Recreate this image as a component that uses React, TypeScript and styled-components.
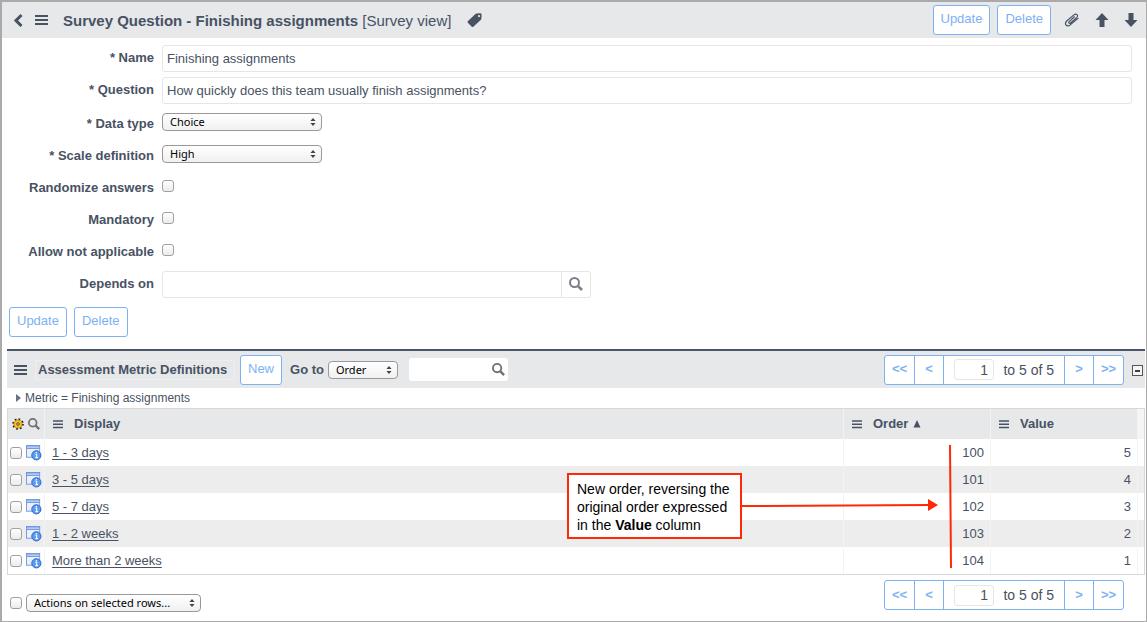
import React from "react";
import styled, { createGlobalStyle } from "styled-components";

const ink = "#485263";
const blue = "#7eb1f2";
const bar = "#e6e8ea";
const red = "#ff2a05";

const GlobalStyle = createGlobalStyle`
  * { box-sizing: border-box; }
  body {
    margin: 0;
    background: #fff;
    color: ${ink};
    font: 13px/16px "Liberation Sans", Arial, sans-serif;
  }
  button, input { font-family: inherit; color: inherit; margin: 0; }
`;

const Frame = styled.main`
  min-height: 100vh;
  border: solid #aaa;
  border-width: 2px 1px 1px 2px;
`;

const HeaderBar = styled.header`
  display: flex;
  align-items: center;
  height: 36px;
  padding: 0 8px 0 10px;
  background: ${bar};
`;

const Title = styled.h1`
  margin: 0 16px 0 15px;
  padding-top: 1px;
  font-size: 15px;
  line-height: 20px;
  span { font-weight: normal; }
`;

const Spacer = styled.div`
  flex: 1;
`;

const IconButton = styled.button`
  display: flex;
  padding: 0;
  border: 0;
  background: none;
`;

const HeaderTools = styled.div`
  display: flex;
  align-items: center;
  gap: 15px;
  margin-left: 13px;
`;

const ButtonGroup = styled.div`
  display: flex;
  gap: 7px;
`;

const Button = styled.button`
  height: 30px;
  padding: 0 7px 2px;
  border: 1px solid ${blue};
  border-radius: 3px;
  background: #fff;
  color: ${blue};
  font-size: 13px;
  line-height: 16px;
  white-space: nowrap;
`;

const Form = styled.form`
  padding: 4px 14px 0 5px;
`;

const FormRow = styled.div`
  display: flex;
  align-items: center;
  height: 32px;
  &:nth-child(n + 3) > label { padding-top: 3px; }
`;

const Label = styled.label`
  width: 147px;
  margin-right: 8px;
  font-weight: bold;
  text-align: right;
  white-space: nowrap;
`;

const TextInput = styled.input`
  flex: 1;
  min-width: 0;
  height: 27px;
  padding: 0 4px;
  border: 1px solid #e6e6e6;
  border-radius: 3px;
  font-size: 13px;
`;

const LookupGroup = styled.div`
  display: flex;
  width: 429px;
  padding-top: 4px;
  input { border-radius: 3px 0 0 3px; }
`;

const LookupButton = styled.button`
  display: flex;
  align-items: center;
  justify-content: center;
  width: 29px;
  height: 27px;
  padding: 0;
  border: 1px solid #e6e6e6;
  border-left: 0;
  border-radius: 0 3px 3px 0;
  background: #fff;
`;

const CheckBox = styled.input.attrs({ type: "checkbox" })`
  appearance: none;
  flex: none;
  width: 12px;
  height: 12px;
  border: 1px solid #a0a0a0;
  border-radius: 3px;
  background: linear-gradient(#fff, #ececec);
  &:checked { background: ${blue}; }
`;

const SelectWrap = styled.span<{ $width: number }>`
  position: relative;
  display: inline-flex;
  width: ${(p) => p.$width}px;
  svg {
    position: absolute;
    right: 6px;
    top: 5px;
    pointer-events: none;
  }
`;

const NativeSelect = styled.select`
  appearance: none;
  width: 100%;
  height: 18px;
  margin: 0;
  padding: 0 0 0 7px;
  border: 1px solid #999;
  border-radius: 4px;
  background: linear-gradient(#fff, #f0f0f0);
  color: #000;
  font: 11px/16px "Noto Sans", sans-serif;
`;

const FormActions = styled(ButtonGroup)`
  padding: 9px 7px 12px;
`;

const ListSection = styled.section`
  margin: 0 1px 0 5px;
  border-top: 2px solid #4b5568;
`;

const ListBar = styled.div`
  display: flex;
  align-items: center;
  height: 37px;
  padding: 0 2px 0 7px;
  background: ${bar};
`;

const ListTitle = styled.h2`
  min-width: 200px;
  margin: 0 5px 0 8px;
  padding: 1px 2px;
  border: 1px solid #eceef0;
  font-size: 13px;
  line-height: 16px;
  white-space: nowrap;
`;

const GoTo = styled.label`
  margin: 0 4px 0 8px;
  font-weight: bold;
  white-space: nowrap;
`;

const SearchBox = styled.div`
  display: flex;
  align-items: center;
  width: 99px;
  height: 23px;
  margin-left: 11px;
  padding-right: 3px;
  border-radius: 3px;
  background: #fff;
  input {
    flex: 1;
    min-width: 0;
    border: 0;
    background: none;
  }
`;

const PagerFrame = styled.nav`
  display: flex;
  flex: none;
  width: 240px;
  height: 30px;
  border: 1px solid ${blue};
  border-radius: 3px;
  background: #fff;
`;

const PageButton = styled.button<{ $side: "left" | "right" }>`
  width: 29px;
  padding: 0 0 2px;
  border: 0 solid ${blue};
  border-${(p) => (p.$side === "left" ? "right" : "left")}-width: 1px;
  background: none;
  color: ${blue};
  font-size: 13px;
  font-weight: bold;
  &:first-child, &:last-child { width: 30px; }
`;

const PageRange = styled.label`
  flex: 1;
  display: flex;
  align-items: center;
  justify-content: space-between;
  padding: 0 10px;
  font-size: 14px;
  white-space: nowrap;
`;

const PageInput = styled.input`
  width: 40px;
  height: 21px;
  padding: 0 5px;
  border: 1px solid #e6e6e6;
  border-radius: 3px;
  font-size: 14px;
  text-align: right;
`;

const Collapse = styled.button`
  display: flex;
  align-items: center;
  justify-content: center;
  width: 11px;
  height: 11px;
  margin: 2px 0 0 8px;
  padding: 0;
  border: 1px solid #555;
  background: #f5f5f5;
`;

const Breadcrumb = styled.div`
  display: flex;
  align-items: center;
  gap: 4px;
  height: 20px;
  padding-left: 9px;
  font-size: 12px;
`;

const TableArea = styled.div`
  position: relative;
`;

const Table = styled.table`
  width: 100%;
  table-layout: fixed;
  border-spacing: 0;
  border: 1px solid #d8d8d8;
  th, td {
    padding: 0 6px 0 7px;
    border-right: 1px solid #f3f3f3;
    white-space: nowrap;
  }
  th { height: 30px; padding-left: 8px; background: ${bar}; text-align: left; }
  td { height: 27px; }
  tbody tr:nth-child(even) td { background: #ededed; }
  td:first-child { padding: 0 2px; }
  th:first-child { padding: 0 4px; }
  th:last-child, td:last-child { padding: 0; border: 0; }
  th:last-child { background: #f5f5f6; }
`;

const Col = styled.col<{ $width?: number }>`
  width: ${(p) => (p.$width ? `${p.$width}px` : "auto")};
`;

const Cell = styled.div<{ $gap: number }>`
  display: flex;
  align-items: center;
  gap: ${(p) => p.$gap}px;
`;

const Heading = styled(Cell)`
  svg + span { margin-left: 10px; }
`;

const NumberCell = styled.td`
  text-align: right;
`;

const RecordLink = styled.a`
  color: inherit;
  text-underline-offset: 2px;
`;

const Callout = styled.aside`
  position: absolute;
  top: 65px;
  right: 403px;
  width: 175px;
  padding: 5px 0 3px 8px;
  border: 2px solid ${red};
  background: #fff;
  color: #000;
  font-size: 14px;
  line-height: 18px;
  white-space: nowrap;
`;

const Pointer = styled.svg`
  position: absolute;
  top: 37px;
  right: 193px;
`;

const ListFooter = styled.footer`
  display: flex;
  align-items: flex-start;
  justify-content: space-between;
  padding: 5px 21px 0 3px;
`;

const RowActions = styled.div`
  display: flex;
  align-items: center;
  gap: 4px;
  padding-top: 14px;
`;

const Bars = () => (
  <svg width="13" height="12" viewBox="0 0 13 12" aria-hidden="true">
    <path d="M0 2H13M0 6H13M0 10H13" stroke={ink} strokeWidth="2" />
  </svg>
);

const SmallBars = () => (
  <svg width="10" height="10" viewBox="0 0 10 10" aria-hidden="true">
    <path d="M0 2H10M0 5.2H10M0 8.5H10" stroke={ink} strokeWidth="1.4" />
  </svg>
);

const Magnifier = ({ size = 14, color = "#707070" }: { size?: number; color?: string }) => (
  <svg width={size} height={size} viewBox="0 0 14 14" fill="none" stroke={color} aria-hidden="true">
    <circle cx="5.5" cy="5.5" r="4.5" strokeWidth="2" />
    <path d="M8.8 8.8L13 13" strokeWidth="2.6" />
  </svg>
);

const Gear = () => (
  <svg width="12" height="12" viewBox="0 0 12 12" aria-hidden="true">
    <circle cx="6" cy="6" r="4.8" fill="none" stroke="#2b2105" strokeWidth="2" strokeDasharray="1.6 2.17" />
    <circle cx="6" cy="6" r="4.1" fill="#f8c02a" stroke="#9a6c00" strokeWidth=".6" />
    <circle cx="6" cy="6" r="1.3" fill="#fff3b0" stroke="#2b2105" strokeWidth=".8" />
  </svg>
);

const RecordInfo = () => (
  <svg width="17" height="17" viewBox="0 0 17 17" aria-hidden="true">
    <rect x=".5" y="1.5" width="14" height="12" fill="#eaf1fd" stroke="#6f98e2" />
    <path d="M0 1.5H15" stroke="#4a78d2" />
    <path d="M1 2.8H14" stroke="#a9c5f5" strokeWidth="1.4" />
    <path d="M1 4.2H14" stroke="#4a78d2" strokeWidth=".8" />
    <circle cx="11" cy="11.5" r="4.9" fill="#5b9bf0" stroke="#2a5fc4" />
    <path d="M10 10.4h1.3v3.4M10 14h2.8M11 7.9v1.3" stroke="#fff" strokeWidth="1.2" fill="none" />
  </svg>
);

const Stepper = () => (
  <svg width="6" height="8" viewBox="0 0 6 8" fill="#444" aria-hidden="true">
    <path d="M3 0L5.6 3H.4ZM3 8L.4 5H5.6Z" />
  </svg>
);

const Arrow = ({ down = false }: { down?: boolean }) => (
  <svg width="14" height="14" viewBox="0 0 14 14" aria-hidden="true">
    <path
      d={down ? "M4.5 0h5v7H13.5L7 14 .5 7H4.5Z" : "M7 0L13.5 7H9.5V14H4.5V7H.5Z"}
      fill={ink}
    />
  </svg>
);

type SelectProps = { id: string; value: string; width: number; label?: string };

const Select = ({ id, value, width, label }: SelectProps) => (
  <SelectWrap $width={width}>
    <NativeSelect id={id} defaultValue={value} aria-label={label}>
      <option>{value}</option>
    </NativeSelect>
    <Stepper />
  </SelectWrap>
);

const Pager = ({ id }: { id: string }) => (
  <PagerFrame aria-label="Pages">
    <PageButton $side="left">&lt;&lt;</PageButton>
    <PageButton $side="left">&lt;</PageButton>
    <PageRange htmlFor={id}>
      <PageInput id={id} defaultValue="1" />
      to 5 of 5
    </PageRange>
    <PageButton $side="right">&gt;</PageButton>
    <PageButton $side="right">&gt;&gt;</PageButton>
  </PagerFrame>
);

const rows = [
  { display: "1 - 3 days", order: 100, value: 5 },
  { display: "3 - 5 days", order: 101, value: 4 },
  { display: "5 - 7 days", order: 102, value: 3 },
  { display: "1 - 2 weeks", order: 103, value: 2 },
  { display: "More than 2 weeks", order: 104, value: 1 },
];

const checks = [
  ["randomize", "Randomize answers"],
  ["mandatory", "Mandatory"],
  ["not-applicable", "Allow not applicable"],
];

export default function App() {
  return (
    <Frame>
      <GlobalStyle />
      <HeaderBar>
        <IconButton aria-label="Back">
          <svg width="23" height="14" viewBox="0 0 23 14" fill="none" stroke={ink} strokeWidth="3">
            <path d="M9.5 2L4 7.5L9.5 13" />
          </svg>
        </IconButton>
        <IconButton aria-label="Menu"><Bars /></IconButton>
        <Title>Survey Question - Finishing assignments <span>[Survey view]</span></Title>
        <IconButton aria-label="Tags">
          <svg width="15" height="15" viewBox="0 0 15 15">
            <path
              fillRule="evenodd"
              fill={ink}
              d="M8.2 1.3Q8.7.6 9.6.6L13.2.3Q14.6.3 14.6 1.7L14.4 5.5Q14.3 6.3 13.7 6.9L6.6 13.6Q5.5 14.6 4.5 13.6L.8 9.8Q0 8.8 1 7.9ZM12 2A1.1 1.1 0 1 0 12 4.2A1.1 1.1 0 1 0 12 2Z"
            />
          </svg>
        </IconButton>
        <Spacer />
        <ButtonGroup>
          <Button>Update</Button>
          <Button>Delete</Button>
        </ButtonGroup>
        <HeaderTools>
          <IconButton aria-label="Attachments">
            <svg width="16" height="16" viewBox="0 0 16 16" fill="none" stroke={ink} strokeWidth="1.2" strokeLinecap="round">
              <path d="M10.4 4.8L5.2 9.6C4.1 10.8 5.4 12 6.5 11L12.6 5.7C15 3.3 12.1.9 9.9 2.9L3 8.8C-.4 12 2.9 15.4 6.2 12.9L14 6.4" />
            </svg>
          </IconButton>
          <IconButton aria-label="Previous record"><Arrow /></IconButton>
          <IconButton aria-label="Next record"><Arrow down /></IconButton>
        </HeaderTools>
      </HeaderBar>

      <Form onSubmit={(e) => e.preventDefault()}>
        <FormRow>
          <Label htmlFor="name">* Name</Label>
          <TextInput id="name" defaultValue="Finishing assignments" />
        </FormRow>
        <FormRow>
          <Label htmlFor="question">* Question</Label>
          <TextInput id="question" defaultValue="How quickly does this team usually finish assignments?" />
        </FormRow>
        <FormRow>
          <Label htmlFor="data-type">* Data type</Label>
          <Select id="data-type" value="Choice" width={160} />
        </FormRow>
        <FormRow>
          <Label htmlFor="scale">* Scale definition</Label>
          <Select id="scale" value="High" width={160} />
        </FormRow>
        {checks.map(([id, text]) => (
          <FormRow key={id}>
            <Label htmlFor={id}>{text}</Label>
            <CheckBox id={id} />
          </FormRow>
        ))}
        <FormRow>
          <Label htmlFor="depends">Depends on</Label>
          <LookupGroup>
            <TextInput id="depends" />
            <LookupButton type="button" aria-label="Look up"><Magnifier color="#7b8088" /></LookupButton>
          </LookupGroup>
        </FormRow>
      </Form>
      <FormActions>
        <Button>Update</Button>
        <Button>Delete</Button>
      </FormActions>

      <ListSection>
        <ListBar>
          <IconButton aria-label="List menu"><Bars /></IconButton>
          <ListTitle>Assessment Metric Definitions</ListTitle>
          <Button>New</Button>
          <GoTo htmlFor="goto">Go to</GoTo>
          <Select id="goto" value="Order" width={70} />
          <SearchBox>
            <input aria-label="Search" />
            <IconButton aria-label="Run search"><Magnifier size={13} /></IconButton>
          </SearchBox>
          <Spacer />
          <Pager id="page-top" />
          <Collapse aria-label="Collapse">
            <svg width="5" height="2" viewBox="0 0 5 2"><path d="M0 1H5" stroke="#000" strokeWidth="1.5" /></svg>
          </Collapse>
        </ListBar>
        <Breadcrumb>
          <svg width="5" height="8" viewBox="0 0 5 8" fill="#687386" aria-hidden="true"><path d="M0 0L5 4L0 8Z" /></svg>
          Metric = Finishing assignments
        </Breadcrumb>
        <TableArea>
          <Table>
            <colgroup>
              <Col $width={37} />
              <Col />
              <Col $width={147} />
              <Col $width={147} />
              <Col $width={6} />
            </colgroup>
            <thead>
              <tr>
                <th>
                  <Cell $gap={4}>
                    <IconButton aria-label="Personalize list"><Gear /></IconButton>
                    <IconButton aria-label="Search list"><Magnifier size={12} /></IconButton>
                  </Cell>
                </th>
                <th><Heading $gap={1}><SmallBars /><span>Display</span></Heading></th>
                <th>
                  <Heading $gap={1}>
                    <SmallBars />
                    <span>Order</span>
                    <svg width="12" height="8" viewBox="0 0 12 8" fill={ink} aria-hidden="true">
                      <path d="M8 0L11.5 7.5H4.5Z" />
                    </svg>
                  </Heading>
                </th>
                <th><Heading $gap={1}><SmallBars /><span>Value</span></Heading></th>
                <th />
              </tr>
            </thead>
            <tbody>
              {rows.map((row) => (
                <tr key={row.order}>
                  <td>
                    <Cell $gap={4}>
                      <CheckBox aria-label={`Select ${row.display}`} />
                      <RecordInfo />
                    </Cell>
                  </td>
                  <td><RecordLink href="#">{row.display}</RecordLink></td>
                  <NumberCell>{row.order}</NumberCell>
                  <NumberCell>{row.value}</NumberCell>
                  <td />
                </tr>
              ))}
            </tbody>
          </Table>
          <Callout>
            New order, reversing the<br />
            original order expressed<br />
            in the <b>Value</b> column
          </Callout>
          <Pointer width="210" height="123" viewBox="0 0 210 123" aria-hidden="true">
            <path d="M0 61L187 60M208 0L209 123" stroke={red} strokeWidth="2" />
            <path d="M186 54L196 60L186 66Z" fill={red} />
          </Pointer>
        </TableArea>
        <ListFooter>
          <RowActions>
            <CheckBox aria-label="Select all rows" />
            <Select id="actions" value="Actions on selected rows..." width={175} label="Actions" />
          </RowActions>
          <Pager id="page-bottom" />
        </ListFooter>
      </ListSection>
    </Frame>
  );
}
